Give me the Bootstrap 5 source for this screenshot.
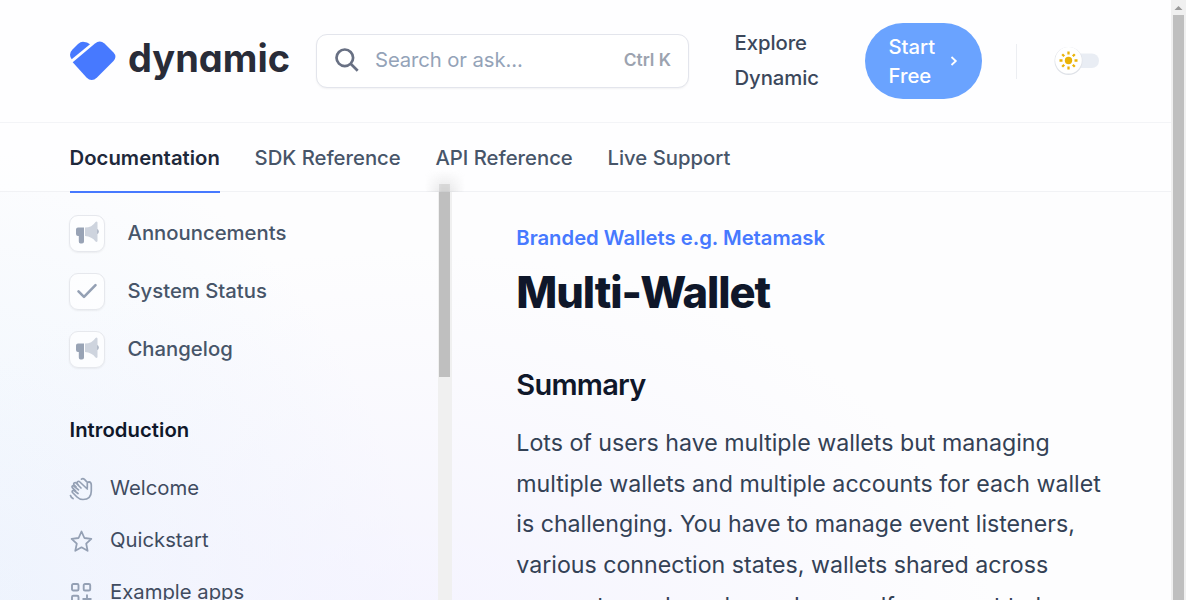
<!DOCTYPE html>
<html lang="en">
<head>
<meta charset="utf-8">
<meta name="viewport" content="width=device-width, initial-scale=1">
<title>Multi-Wallet - Dynamic</title>
<link href="https://cdn.jsdelivr.net/npm/bootstrap@5.3.0/dist/css/bootstrap.min.css" rel="stylesheet">
<style>
body{font-family:Inter,"Liberation Sans",sans-serif;font-size:20.3px;line-height:34.8px;color:#475569;height:600px;overflow:hidden;
background:radial-gradient(ellipse 600px 400px at 400px 650px,rgba(240,239,255,.7),rgba(247,246,255,0) 100%),radial-gradient(ellipse 460px 520px at -40px 640px,rgba(230,241,253,.75),rgba(243,248,255,0) 100%),#fdfdfe}
a{color:inherit;text-decoration:none}
svg{display:block;flex:none}
.page{width:1171px;height:600px}
.topbar{height:123px;padding-left:70px;border-bottom:1px solid #f3f4f7;background:rgba(255,255,255,.6)}
.tabs{height:69px;padding-left:69.5px;gap:34.7px;border-bottom:1px solid #f1f2f5;font-weight:500;background:rgba(255,255,255,.6)}
.tabs a{height:70px;padding-top:18px;white-space:nowrap}
.tabs a.current{color:#1e293b;font-weight:600;letter-spacing:.03px;border-bottom:2px solid #4779ff}
.search{width:373px;height:54px;margin-left:26px;border:1px solid #e3e5ec;border-radius:11px;background:#fff;padding:0 17px 2px 18px;box-shadow:0 1px 2px rgba(0,0,0,.05);color:#94a3b8;letter-spacing:-.1px}
.search kbd{background:none;color:#9ca3af;font:600 17.4px/24px Inter,sans-serif;letter-spacing:0;padding:0}
.explore{width:90px;margin-left:45.5px;font-weight:500;color:#3b475b;letter-spacing:-.05px;margin-top:-1px}
.start{width:117px;height:76px;margin-left:40.5px;border-radius:38px;background:#6aa3ff;color:#fff;font-weight:500;line-height:29px;padding:0 24px 0 23.5px}
.rule{width:1px;height:35px;background:#eceef2;margin-left:34px}
.switch{width:45px;height:29px;margin:-2px 0 0 37px}
.sidebar{width:438px;padding:23px 0 0 69px}
.side-link{height:36px;margin-bottom:22px;gap:22.5px;font-weight:500}
.tile{width:36px;height:37px;border:1px solid #e6e8ed;border-radius:9px;background:rgba(255,255,255,.65);box-shadow:0 1px 2px rgba(0,0,0,.06)}
.group{font-size:20.3px;line-height:35px;font-weight:600;letter-spacing:.04px;color:#0f172a;margin:45px 0 24px .5px}
.sub-link{height:35px;margin-bottom:17px;gap:17px;color:#3f4b60}
.track{width:14px;background:#f0f0f0;position:relative}
.thumb{width:11px;height:185px;margin-left:1px;background:#bfbfbf}
.glow{position:absolute;left:-13px;top:-22px;width:40px;height:22px;background:linear-gradient(rgba(190,190,190,0),rgba(180,180,180,.3));-webkit-mask:linear-gradient(90deg,transparent,#000 42%,#000 58%,transparent);mask:linear-gradient(90deg,transparent,#000 42%,#000 58%,transparent)}
.glow::after{content:"";position:absolute;left:14px;bottom:0;width:11px;height:8px;background:rgba(180,180,180,.4)}
.article{width:655px;padding-left:64.3px;white-space:nowrap}
.eyebrow{margin:29px 0 0;color:#4779ff;font-weight:600;letter-spacing:-.02px}
h1{font-size:43.5px;line-height:52px;font-weight:800;letter-spacing:-1.09px;color:#0f172a;margin:10px 0 0}
h2{font-size:29px;line-height:46px;font-weight:600;letter-spacing:-.75px;color:#0f172a;margin:44px 0 0}
.prose{font-size:23.2px;line-height:40.6px;letter-spacing:-.01px;color:#334155;margin:15.4px 0 0}
.browser-bar{width:15px;height:600px;background:#f0f0f0;padding:6px 2px 0}
.browser-thumb{width:11px;height:585px;background:#bfbfbf;margin-top:5px}
</style>
</head>
<body>
<div class="d-flex">
<div class="page">
<header class="topbar d-flex align-items-center">
<a href="#" aria-label="dynamic"><svg width="220" height="60" viewBox="0 0 220 60">
<path d="M1.7 28.3Q-2 23 2.5 18.5L8 13Q10.5 10.7 13 10.7Q17.5 10.7 20 13.3Z" fill="#4779ff"/>
<path d="M2.7 31.2L25 12.5Q29.8 8.5 34.5 12.5L43.5 21.5Q47.3 25.5 43.5 30L27 46.5Q21.7 51.5 16.5 46.5Z" fill="#4779ff"/>
<text x="58" y="41" font-family="Inter,sans-serif" font-size="39" font-weight="700" fill="#292c38" textLength="162" lengthAdjust="spacingAndGlyphs" style="font-feature-settings:'cv11'">dynamic</text></svg></a>
<div class="search d-flex align-items-center">
<svg width="24" height="24" viewBox="0 0 24 24" fill="none" stroke="#687083" stroke-width="2.7"><circle cx="9.8" cy="9.8" r="8.3"/><path d="M15.7 15.7L22.7 22.7"/></svg>
<span class="ms-3">Search or ask...</span><kbd class="ms-auto">Ctrl K</kbd></div>
<a class="explore" href="#">Explore Dynamic</a>
<a class="start d-flex align-items-center justify-content-between" href="#"><span>Start<br>Free</span><svg width="8" height="11" viewBox="0 0 8 11" fill="none" stroke="#fff" stroke-width="1.8"><path d="M1.5 1L5.8 5L1.5 9"/></svg></a>
<div class="rule"></div>
<svg class="switch" viewBox="0 0 45 29"><rect x="12" y="7.5" width="33" height="14.5" rx="7.2" fill="#e9edf4"/><circle cx="14.5" cy="15" r="14" fill="#dfe2e8"/><circle cx="14.5" cy="14.3" r="13.3" fill="#fff"/><circle cx="14.5" cy="14.5" r="3.7" fill="#eab308"/><path d="M14.5 5.5v3M14.5 20.5v3M5.5 14.5h3M20.5 14.5h3M8.2 8.2l2 2M18.8 18.8l2 2M8.2 20.8l2-2M18.8 10.2l2-2" stroke="#eab308" stroke-width="2.3"/></svg>
</header>
<nav class="tabs d-flex"><a class="current" href="#">Documentation</a><a href="#">SDK Reference</a><a href="#">API Reference</a><a href="#">Live Support</a></nav>
<div class="d-flex" style="height:408px">
<aside class="sidebar">
<a class="side-link d-flex align-items-center" href="#"><span class="tile d-flex align-items-center justify-content-center"><svg width="24" height="24" viewBox="0 0 24 24"><path d="M3 6.5H9V15V20.5Q9 22.5 7 22.5H5.5Q3.8 22.5 3.8 20.5V15H3Q1 15 1 13V8.5Q1 6.5 3 6.5ZM22 8q1.7 0 1.7 2.6T22 13Z" fill="#98a3b5"/><path d="M10 6.5Q17 6.5 20.5 1Q22 0 22.5 1.5V20Q22 21.5 20.5 20.5Q17 15.5 10 15Z" fill="#ced4de"/></svg></span>Announcements</a>
<a class="side-link d-flex align-items-center" href="#"><span class="tile d-flex align-items-center justify-content-center"><svg width="22" height="18" viewBox="0 0 22 18" fill="none" stroke="#94a0b4" stroke-width="2.6" stroke-linecap="round" stroke-linejoin="round"><path d="M2.5 9.3L8 14.8L19.5 3.2"/></svg></span>System Status</a>
<a class="side-link d-flex align-items-center" href="#"><span class="tile d-flex align-items-center justify-content-center"><svg width="24" height="24" viewBox="0 0 24 24"><path d="M3 6.5H9V15V20.5Q9 22.5 7 22.5H5.5Q3.8 22.5 3.8 20.5V15H3Q1 15 1 13V8.5Q1 6.5 3 6.5ZM22 8q1.7 0 1.7 2.6T22 13Z" fill="#98a3b5"/><path d="M10 6.5Q17 6.5 20.5 1Q22 0 22.5 1.5V20Q22 21.5 20.5 20.5Q17 15.5 10 15Z" fill="#ced4de"/></svg></span>Changelog</a>
<h5 class="group">Introduction</h5>
<a class="sub-link d-flex align-items-center" href="#"><svg width="24" height="24" viewBox="0 0 24 24" fill="none" stroke="#94a0b4" stroke-width="1.7" stroke-linecap="round" stroke-linejoin="round"><path d="M18.3 10.5V6.2Q18.3 4.8 20 4.8Q22.3 5 22.3 8V14Q22.3 22.5 14 22.5Q10.5 22.5 8 20L3.5 15.5Q2.7 14 4 13.4L5 13.5L9 16.5M6.5 13.8L3.3 10.6Q2.5 9 4.2 8.5L9.5 12.8M7 9.8L4.7 7.5Q4.5 5.5 6.5 5.5L12 11M9.3 8L8 6.3Q8 4 10.3 4.5L18.3 12M12.5 2.2Q14 1 15.5 2.4L17.6 4.6M1.5 18.5Q2 20.5 4 21.5"/></svg>Welcome</a>
<a class="sub-link d-flex align-items-center" href="#"><svg width="24" height="24" viewBox="0 0 24 24" fill="none" stroke="#94a0b4" stroke-width="1.8" stroke-linejoin="round"><path d="M12.5 2.5L15.4 9L22.3 9.8L17.2 14.6L18.6 21.8L12.5 18.3L6.3 21.8L7.8 14.6L2.6 9.8L9.6 9Z"/></svg>Quickstart</a>
<a class="sub-link d-flex align-items-center" href="#"><svg width="24" height="24" viewBox="0 0 24 24" fill="none" stroke="#94a0b4" stroke-width="1.9"><rect x="3" y="3" width="6.5" height="6.5" rx="1.3"/><rect x="14.7" y="3" width="6.5" height="6.5" rx="1.3"/><rect x="3" y="14.7" width="6.5" height="6.5" rx="1.3"/><path d="M18 13.5v9M13.5 18h9"/></svg>Example apps</a>
</aside>
<div class="track"><div class="thumb"></div><div class="glow"></div></div>
<main class="article">
<p class="eyebrow">Branded Wallets e.g. Metamask</p>
<h1>Multi-Wallet</h1>
<h2>Summary</h2>
<p class="prose">Lots of users have multiple wallets but managing<br>multiple wallets and multiple accounts for each wallet<br>is challenging. You have to manage event listeners,<br>various connection states, wallets shared across<br>accounts, and much need yourself you want to be</p>
</main>
</div>
</div>
<div class="browser-bar"><svg width="11" height="4" viewBox="0 0 11 4"><path d="M5.5 0L9.5 4H1.5Z" fill="#999"/></svg><div class="browser-thumb"></div></div>
</div>
<script src="https://cdn.jsdelivr.net/npm/bootstrap@5.3.0/dist/js/bootstrap.bundle.min.js"></script>
</body>
</html>
